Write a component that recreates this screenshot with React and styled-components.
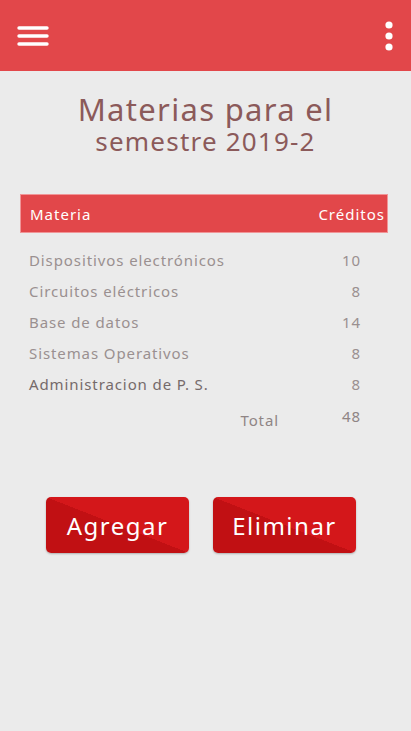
import React from "react";
import styled, { createGlobalStyle } from "styled-components";

const GlobalStyle = createGlobalStyle`
  html, body {
    margin: 0;
    padding: 0;
    background: #ebebeb;
  }
  body {
    font-family: "Noto Sans", "Open Sans", sans-serif;
  }
`;

const Page = styled.div`
  min-height: 731px;
  background: #ebebeb;
  display: flex;
  flex-direction: column;
`;

const TopBar = styled.header`
  height: 71px;
  background: #e2474a;
  display: flex;
  align-items: center;
  justify-content: space-between;
  padding: 0 17px 0 17px;
  box-sizing: border-box;
`;

const IconButton = styled.button`
  background: none;
  border: none;
  padding: 0;
  display: flex;
  align-items: center;
  cursor: pointer;
`;

const Title = styled.h1`
  margin: 21px 0 0;
  text-align: center;
  color: #8b5a5a;
  font-weight: 400;
  font-size: 31px;
  line-height: 34px;
  letter-spacing: 1.3px;
`;

const SubTitle = styled.span`
  display: block;
  font-size: 26px;
  line-height: 30px;
  letter-spacing: 1.2px;
`;

const Table = styled.div`
  margin: 38px 23px 0 20px;
`;

const HeadRow = styled.div`
  height: 39px;
  background: #e2474a;
  border: 1px solid #f09597;
  box-sizing: border-box;
  display: flex;
  align-items: center;
  justify-content: space-between;
  padding: 0 2px 0 9px;
  color: #fff;
  font-size: 15px;
  letter-spacing: 1px;
`;

const Body = styled.div`
  padding: 11px 27px 0 9px;
`;

const Row = styled.div`
  height: 31px;
  display: flex;
  align-items: center;
  justify-content: space-between;
  font-size: 15px;
  letter-spacing: 0.9px;
  color: ${(p) => (p.strong ? "#756a6a" : "#9a9090")};
`;

const Credits = styled.span`
  color: #9a9090;
`;

const TotalRow = styled.div`
  display: flex;
  justify-content: flex-end;
  align-items: flex-start;
  margin-top: 7px;
  font-size: 15px;
  letter-spacing: 0.9px;
  color: #8f8585;
`;

const TotalLabel = styled.span`
  margin: 4px 63px 0 0;
`;

const Actions = styled.div`
  display: flex;
  justify-content: center;
  gap: 24px;
  margin: 67px 0 0 -9px;
`;

const ActionButton = styled.button`
  width: 143px;
  height: 56px;
  border: none;
  border-radius: 5px;
  background: linear-gradient(to top right, #c11013 50%, #d4171a 50%);
  color: #fff;
  font-family: inherit;
  font-size: 24px;
  letter-spacing: 1.5px;
  box-shadow: 0 1px 2px rgba(0, 0, 0, 0.25);
  cursor: pointer;
`;

const materias = [
  { nombre: "Dispositivos electrónicos", creditos: 10 },
  { nombre: "Circuitos eléctricos", creditos: 8 },
  { nombre: "Base de datos", creditos: 14 },
  { nombre: "Sistemas Operativos", creditos: 8 },
  { nombre: "Administracion de P. S.", creditos: 8, strong: true },
];

export default function App() {
  const total = materias.reduce((s, m) => s + m.creditos, 0);
  return (
    <Page>
      <GlobalStyle />
      <TopBar>
        <IconButton aria-label="menu">
          <svg width="32" height="22" viewBox="0 0 32 22">
            <g stroke="#fff" strokeWidth="3.4" strokeLinecap="round">
              <line x1="2" y1="3" x2="30" y2="3" />
              <line x1="2" y1="11" x2="30" y2="11" />
              <line x1="2" y1="19" x2="30" y2="19" />
            </g>
          </svg>
        </IconButton>
        <IconButton aria-label="more">
          <svg width="10" height="30" viewBox="0 0 10 30">
            <g fill="#fff">
              <circle cx="5" cy="4" r="3.6" />
              <circle cx="5" cy="15" r="3.6" />
              <circle cx="5" cy="26" r="3.6" />
            </g>
          </svg>
        </IconButton>
      </TopBar>

      <Title>
        Materias para el
        <SubTitle>semestre 2019-2</SubTitle>
      </Title>

      <Table>
        <HeadRow>
          <span>Materia</span>
          <span>Créditos</span>
        </HeadRow>
        <Body>
          {materias.map((m) => (
            <Row key={m.nombre} strong={m.strong}>
              <span>{m.nombre}</span>
              <Credits>{m.creditos}</Credits>
            </Row>
          ))}
          <TotalRow>
            <TotalLabel>Total</TotalLabel>
            <span>{total}</span>
          </TotalRow>
        </Body>
      </Table>

      <Actions>
        <ActionButton>Agregar</ActionButton>
        <ActionButton>Eliminar</ActionButton>
      </Actions>
    </Page>
  );
}
